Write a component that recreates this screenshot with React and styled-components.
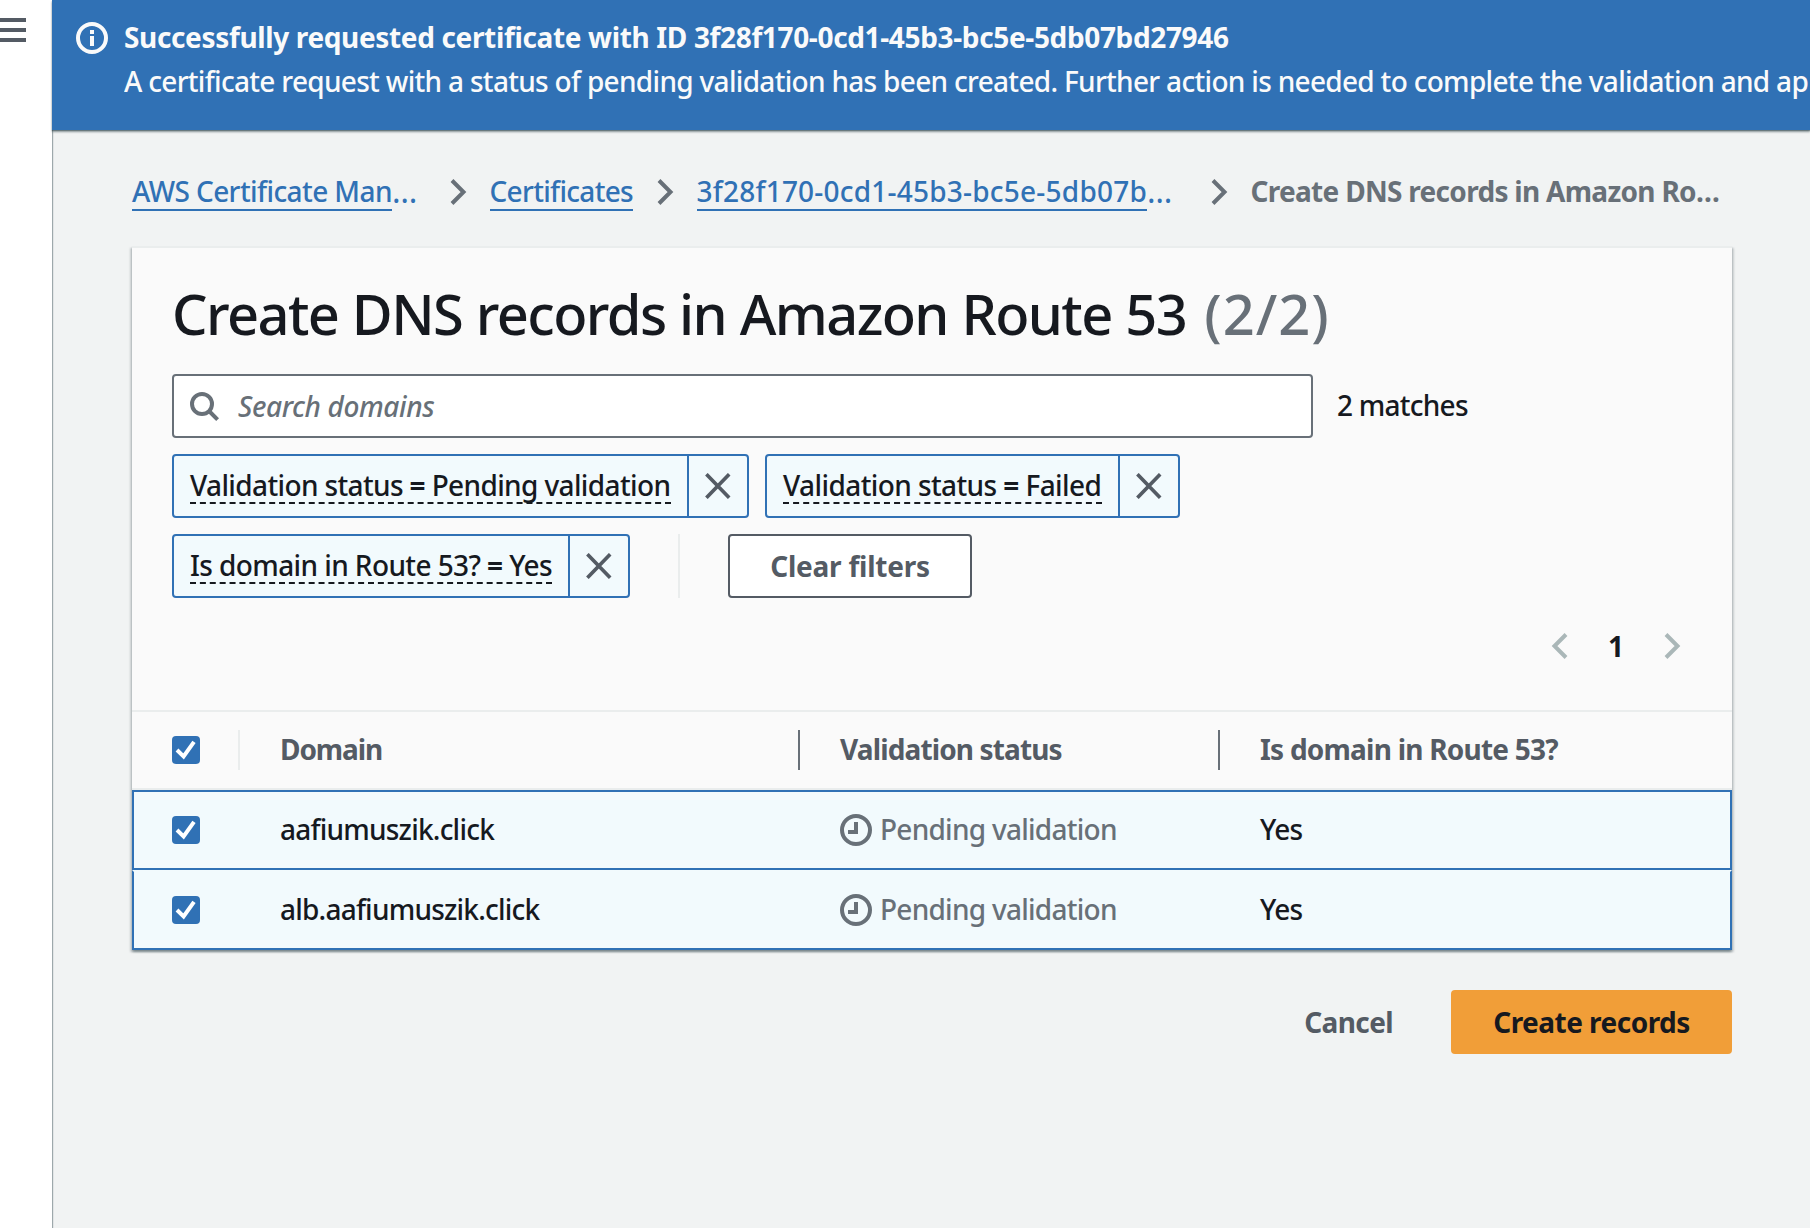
import React from "react";
import styled, { createGlobalStyle } from "styled-components";

const color = {
  blue: "#3071b5",
  text: "#16191f",
  strong: "#545b64",
  muted: "#687078",
  disabled: "#aab7b8",
  line: "#eaeded",
  page: "#f1f3f3",
  card: "#fafafa",
  selected: "#f2fafd",
  orange: "#f19e38",
};

const GlobalStyle = createGlobalStyle`
  *, *::before, *::after { box-sizing: border-box; }
  body {
    margin: 0;
    overflow: hidden;
    color: ${color.text};
    font-family: "Noto Sans", "Open Sans", sans-serif;
    font-size: 28px;
    font-weight: 500;
    line-height: 44px;
  }
`;

const Shell = styled.div`
  display: flex;
  width: 100%;
  height: 100vh;
  overflow: hidden;
  background: ${color.page};
`;

const SideRail = styled.aside`
  position: relative;
  z-index: 1;
  flex: none;
  width: 52px;
  padding-top: 18px;
  background: #fff;
  box-shadow: 1px 0 1px rgba(0, 28, 36, 0.35);
`;

const MenuButton = styled.div`
  display: flex;
  flex-direction: column;
  gap: 6px;
  width: 26px;
`;

const MenuBar = styled.span`
  height: 4px;
  background: ${color.strong};
`;

const Main = styled.main`
  flex: 1;
  min-width: 0;
`;

const Banner = styled.div`
  position: relative;
  z-index: 2;
  display: flex;
  gap: 16px;
  height: 130px;
  padding: 15px 0 0 24px;
  color: #fafafa;
  background: ${color.blue};
  box-shadow: 0 2px 2px rgba(0, 28, 36, 0.4), 0 1px 1px rgba(0, 28, 36, 0.3);
`;

const BannerIcon = styled.span`
  display: flex;
  flex: none;
  padding-top: 7px;
`;

const BannerText = styled.div`
  flex: 1;
  min-width: 0;
  overflow: hidden;
`;

const Text = styled.div`
  white-space: nowrap;
  font-weight: ${(p) => (p.$bold ? 700 : 500)};
  letter-spacing: ${(p) => p.$track || 0}px;
  color: ${(p) => p.$color || "inherit"};
`;

const Content = styled.div`
  padding: 43px 78px 0 80px;
`;

const Breadcrumbs = styled.nav`
  display: flex;
  height: 38px;
  line-height: 36px;
  color: ${color.blue};
`;

const Crumb = styled.div`
  display: flex;
  flex: none;
  width: ${(p) => p.$width}px;
  white-space: nowrap;
`;

const CrumbLink = styled.span`
  border-bottom: 2px solid ${color.blue};
  letter-spacing: ${(p) => p.$track}px;
`;

const Ellipsis = styled.span`
  font-size: 32px;
  font-weight: 400;
`;

const CrumbArrow = styled.span`
  display: flex;
  flex: none;
  align-items: center;
  margin: 0 16px;
  color: ${color.muted};
`;

const Card = styled.section`
  margin-top: 35px;
  border-top: 2px solid ${color.line};
  background: ${color.card};
  box-shadow: 0 2px 2px rgba(0, 28, 36, 0.3), 2px 2px 2px rgba(0, 28, 36, 0.15),
    -2px 2px 2px rgba(0, 28, 36, 0.15);
`;

const CardHead = styled.div`
  padding: 29px 40px 42px;
`;

const Title = styled.h1`
  display: flex;
  margin: 0 0 25px;
  font-size: 56px;
  font-weight: 500;
  line-height: 72px;
  letter-spacing: -1.6px;
  word-spacing: 0.6px;
  white-space: nowrap;
`;

const Counter = styled.span`
  margin-left: 18px;
  color: ${color.muted};
  letter-spacing: 1px;
`;

const SearchRow = styled.div`
  display: flex;
  align-items: center;
  gap: 24px;
`;

const Matches = styled(Text)`
  padding-bottom: 2px;
`;

const SearchBox = styled.div`
  display: flex;
  align-items: center;
  gap: 18px;
  width: 1141px;
  height: 64px;
  padding: 0 14px;
  border: 2px solid ${color.muted};
  border-radius: 4px;
  color: ${color.muted};
  background: #fff;
`;

const Placeholder = styled.span`
  font-style: italic;
  letter-spacing: -0.4px;
`;

const Filters = styled.div`
  display: flex;
  gap: 16px;
  margin-top: 16px;
`;

const Chip = styled.div`
  display: flex;
  width: ${(p) => p.$width}px;
  height: 64px;
  border: 2px solid ${color.blue};
  border-radius: 4px;
  background: ${color.selected};
`;

const ChipLabel = styled.div`
  display: flex;
  flex: 1;
  align-items: center;
  min-width: 0;
  padding: 0 16px;
`;

const ChipText = styled.span`
  flex: 1;
  min-width: 0;
  border-bottom: 2px dashed ${color.text};
  line-height: 34px;
  letter-spacing: ${(p) => p.$track}px;
  white-space: nowrap;

  b { font-weight: 700; }
`;

const ChipRemove = styled.span`
  display: flex;
  align-items: center;
  padding: 0 16px;
  border-left: 2px solid ${color.blue};
  color: ${color.strong};
`;

const Divider = styled.span`
  width: 2px;
  height: 64px;
  margin: 0 32px;
  background: ${color.line};
`;

const Button = styled.div`
  display: flex;
  align-items: center;
  justify-content: center;
  width: ${(p) => p.$width}px;
  height: 64px;
  border: 2px solid ${(p) => (p.$primary ? color.orange : color.strong)};
  border-radius: 4px;
  color: ${(p) => (p.$primary ? color.text : color.strong)};
  background: ${(p) => (p.$primary ? color.orange : "#fff")};
`;

const Pagination = styled.div`
  display: flex;
  align-items: center;
  justify-content: flex-end;
  height: 44px;
  margin-top: 26px;
  padding-right: 4px;
  color: ${color.disabled};
`;

const PageNumber = styled.span`
  width: 80px;
  color: ${color.text};
  font-weight: 700;
  text-align: center;
`;

const HeaderRow = styled.div`
  display: grid;
  grid-template-columns: 108px 560px 420px 1fr;
  align-items: center;
  height: 80px;
  border-top: 2px solid ${color.line};
  border-bottom: 2px solid ${color.line};
  color: ${color.strong};
`;

const HeaderCell = styled.div`
  display: flex;
  align-items: center;
  height: 40px;
  padding-left: 40px;
  border-right: ${(p) => (p.$edge ? `2px solid ${p.$edge}` : "0")};
`;

const Row = styled.div`
  display: grid;
  grid-template-columns: 106px 560px 420px 1fr;
  align-items: center;
  height: 80px;
  border: 2px solid ${color.blue};
  border-top-color: ${(p) => (p.$first ? color.blue : color.selected)};
  background: ${color.selected};
`;

const Cell = styled.div`
  display: flex;
  align-items: center;
  gap: 8px;
  padding-left: ${(p) => p.$pad || 40}px;
`;

const CellText = styled(Text)`
  padding-bottom: 2px;
`;

const Checkbox = styled.span`
  display: flex;
  width: 28px;
  height: 28px;
  border-radius: 4px;
  background: ${color.blue};
`;

const Actions = styled.div`
  display: flex;
  align-items: center;
  justify-content: flex-end;
  gap: 58px;
  margin-top: 40px;
`;

const Svg = styled.svg`
  display: block;
  flex: none;
  fill: none;
  stroke: currentColor;
  stroke-width: ${(p) => p.$stroke || 4}px;
  color: ${(p) => p.$color || "inherit"};
`;

const InfoIcon = () => (
  <Svg width="32" height="32" viewBox="0 0 32 32">
    <circle cx="16" cy="16" r="14" />
    <path d="M16 8v4M16 14v10" />
  </Svg>
);

const ClockIcon = () => (
  <Svg width="32" height="32" viewBox="0 0 32 32" $color={color.muted}>
    <circle cx="16" cy="16" r="14" />
    <path d="M16 8v10H8" />
  </Svg>
);

const SearchIcon = () => (
  <Svg width="32" height="32" viewBox="0 0 32 32">
    <circle cx="14" cy="14" r="10" />
    <path d="M21 21l8.6 8.6" />
  </Svg>
);

const Chevron = ({ left }) => (
  <Svg width="32" height="32" viewBox="0 0 32 32">
    <path d={left ? "M22 4.5L10.5 16L22 27.5" : "M10 4.5L21.5 16L10 27.5"} />
  </Svg>
);

const CloseIcon = () => (
  <Svg width="26" height="26" viewBox="0 0 26 26" $stroke={3.6}>
    <path d="M1.4 1.2l22.8 23.6M24.2 1.2L1.4 24.8" />
  </Svg>
);

const Checked = () => (
  <Checkbox>
    <Svg width="28" height="28" viewBox="0 0 28 28" $color="#fff">
      <path d="M5 14l6.6 6.4L22 5.8" />
    </Svg>
  </Checkbox>
);

const FilterChip = ({ name, value, track, width }) => (
  <Chip $width={width}>
    <ChipLabel>
      <ChipText $track={track}>
        {name} <b>=</b> {value}
      </ChipText>
    </ChipLabel>
    <ChipRemove>
      <CloseIcon />
    </ChipRemove>
  </Chip>
);

const domains = [
  { name: "aafiumuszik.click", status: "Pending validation", inRoute53: "Yes" },
  { name: "alb.aafiumuszik.click", status: "Pending validation", inRoute53: "Yes" },
];

export default function App() {
  return (
    <Shell>
      <GlobalStyle />
      <SideRail>
        <MenuButton>
          <MenuBar />
          <MenuBar />
          <MenuBar />
        </MenuButton>
      </SideRail>
      <Main>
        <Banner>
          <BannerIcon>
            <InfoIcon />
          </BannerIcon>
          <BannerText>
            <Text $bold $track={-0.35}>
              Successfully requested certificate with ID 3f28f170-0cd1-45b3-bc5e-5db07bd27946
            </Text>
            <Text $track={-0.69}>
              A certificate request with a status of pending validation has been created. Further
              action is needed to complete the validation and ap
            </Text>
          </BannerText>
        </Banner>
        <Content>
          <Breadcrumbs>
            <Crumb $width={293.5}>
              <CrumbLink $track={-0.58}>AWS Certificate Man</CrumbLink>
              <Ellipsis>…</Ellipsis>
            </Crumb>
            <CrumbArrow>
              <Chevron />
            </CrumbArrow>
            <Crumb $width={143}>
              <CrumbLink $track={-0.68}>Certificates</CrumbLink>
            </Crumb>
            <CrumbArrow>
              <Chevron />
            </CrumbArrow>
            <Crumb $width={490}>
              <CrumbLink $track={0.22}>3f28f170-0cd1-45b3-bc5e-5db07b</CrumbLink>
              <Ellipsis>…</Ellipsis>
            </Crumb>
            <CrumbArrow>
              <Chevron />
            </CrumbArrow>
            <Text $bold $track={-0.7} $color={color.muted}>
              Create DNS records in Amazon Ro…
            </Text>
          </Breadcrumbs>
          <Card>
            <CardHead>
              <Title>
                Create DNS records in Amazon Route 53
                <Counter>(2/2)</Counter>
              </Title>
              <SearchRow>
                <SearchBox>
                  <SearchIcon />
                  <Placeholder>Search domains</Placeholder>
                </SearchBox>
                <Matches $track={-0.75}>2 matches</Matches>
              </SearchRow>
              <Filters>
                <FilterChip
                  name="Validation status"
                  value="Pending validation"
                  track={-0.63}
                  width={577}
                />
                <FilterChip name="Validation status" value="Failed" track={-0.59} width={415} />
              </Filters>
              <Filters>
                <FilterChip name="Is domain in Route 53?" value="Yes" track={-0.6} width={458} />
                <Divider />
                <Button $width={244}>
                  <Text $bold $track={-0.24}>
                    Clear filters
                  </Text>
                </Button>
              </Filters>
              <Pagination>
                <Chevron left />
                <PageNumber>1</PageNumber>
                <Chevron />
              </Pagination>
            </CardHead>
            <HeaderRow>
              <HeaderCell $edge={color.line}>
                <Checked />
              </HeaderCell>
              <HeaderCell $edge={color.muted}>
                <CellText $bold $track={-1.1}>
                  Domain
                </CellText>
              </HeaderCell>
              <HeaderCell $edge={color.muted}>
                <CellText $bold $track={-0.87}>
                  Validation status
                </CellText>
              </HeaderCell>
              <HeaderCell>
                <CellText $bold $track={-0.77}>
                  Is domain in Route 53?
                </CellText>
              </HeaderCell>
            </HeaderRow>
            {domains.map((domain, index) => (
              <Row key={domain.name} $first={index === 0}>
                <Cell $pad={38}>
                  <Checked />
                </Cell>
                <Cell>
                  <CellText $track={-0.78}>{domain.name}</CellText>
                </Cell>
                <Cell>
                  <ClockIcon />
                  <CellText $track={-0.74} $color={color.muted}>
                    {domain.status}
                  </CellText>
                </Cell>
                <Cell>
                  <CellText $track={-0.8}>{domain.inRoute53}</CellText>
                </Cell>
              </Row>
            ))}
          </Card>
          <Actions>
            <Text $bold $track={-0.6} $color={color.strong}>
              Cancel
            </Text>
            <Button $primary $width={281}>
              <Text $bold $track={-0.52}>
                Create records
              </Text>
            </Button>
          </Actions>
        </Content>
      </Main>
    </Shell>
  );
}
